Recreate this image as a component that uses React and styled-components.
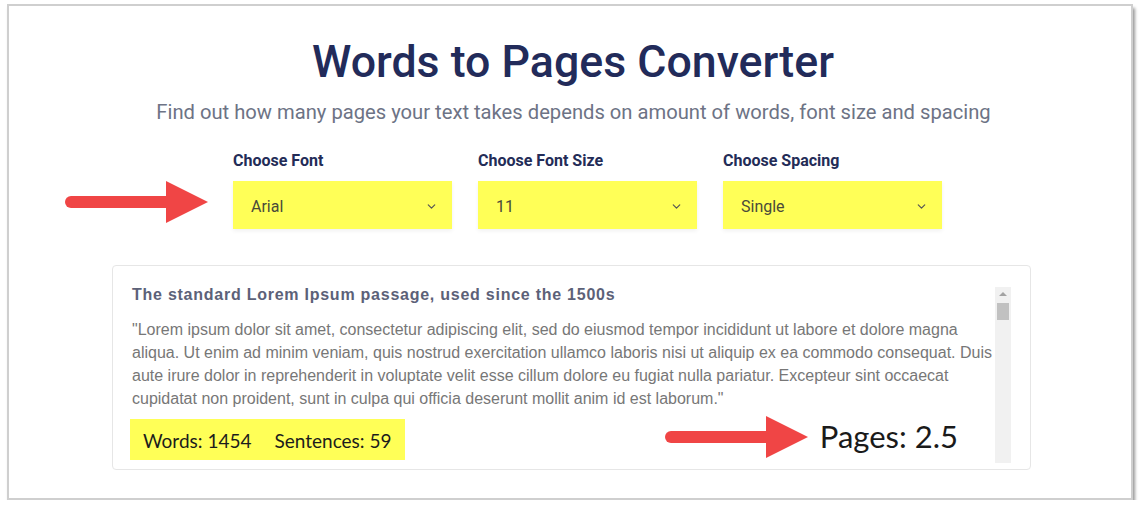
import React from 'react'
import styled, {createGlobalStyle} from "styled-components";
import {ChevronDown} from 'lucide-react'

const GlobalStyle = createGlobalStyle`
  body {
    margin: 0;
    background: #fff;
    font-family: 'Roboto', sans-serif;
  }
`;

const selects = [
  {label: 'Choose Font', value: 'Arial'},
  {label: 'Choose Font Size', value: '11'},
  {label: 'Choose Spacing', value: 'Single'},
];

const passage = '"Lorem ipsum dolor sit amet, consectetur adipiscing elit, sed do eiusmod tempor incididunt ut labore et dolore magna aliqua. Ut enim ad minim veniam, quis nostrud exercitation ullamco laboris nisi ut aliquip ex ea commodo consequat. Duis aute irure dolor in reprehenderit in voluptate velit esse cillum dolore eu fugiat nulla pariatur. Excepteur sint occaecat cupidatat non proident, sunt in culpa qui officia deserunt mollit anim id est laborum."';

function Arrow() {
    return (
        <svg width="143" height="42" viewBox="0 0 143 42">
            <line x1="6" y1="21" x2="104" y2="21" stroke="#f04545" strokeWidth="12" strokeLinecap="round" />
            <polygon points="101,0 143,21 101,42" fill="#f04545" />
        </svg>
    )
}

function App() {
    return (
        <>
            <GlobalStyle />
            <Frame>
                <Title>Words to Pages Converter</Title>
                <Subtitle>Find out how many pages your text takes depends on amount of words, font size and spacing</Subtitle>
                <ControlsRow>
                    <ArrowSlot $bottom={6}><Arrow /></ArrowSlot>
                    {selects.map((s) => (
                        <Field key={s.label}>
                            <Label>{s.label}</Label>
                            <Select>
                                <span>{s.value}</span>
                                <ChevronDown size={13} strokeWidth={2.2} color="#555" />
                            </Select>
                        </Field>
                    ))}
                </ControlsRow>
                <Card>
                    <TextColumn>
                        <Heading>The standard Lorem Ipsum passage, used since the 1500s</Heading>
                        <Passage>{passage}</Passage>
                        <StatsRow>
                            <Stats>
                                <span>Words: 1454</span>
                                <span>Sentences: 59</span>
                            </Stats>
                            <Result>
                                <Arrow />
                                <Pages>Pages: 2.5</Pages>
                            </Result>
                        </StatsRow>
                    </TextColumn>
                    <Scrollbar>
                        <ScrollUp />
                        <Thumb />
                    </Scrollbar>
                </Card>
            </Frame>
        </>
    )
}

export default App

const Frame = styled.div`
  box-sizing: border-box;
  margin: 4px 0 0 7px;
  width: 1126px;
  height: 496px;
  border: 2px solid #cfcfcf;
  box-shadow: 2px 4px 3px rgba(0,0,0,0.4);
  padding-top: 30px;
  display: flex;
  flex-direction: column;
  align-items: stretch;
`;

const Title = styled.h1`
  margin: 0;
  text-align: center;
  font-family: 'Roboto', sans-serif;
  font-weight: 500;
  font-size: 44.7px;
  line-height: 52px;
  color: #222b5a;
  padding-left: 6px;
`;

const Subtitle = styled.p`
  margin: 12px 0 0;
  text-align: center;
  font-size: 20.2px;
  line-height: 24px;
  color: #6d7385;
  padding-left: 7px;
`;

const ControlsRow = styled.div`
  display: flex;
  align-items: flex-end;
  gap: 26px;
  margin-top: 27px;
  padding-left: 56px;
`;

const ArrowSlot = styled.div`
  display: flex;
  margin-right: -1px;
  margin-bottom: ${p => p.$bottom}px;
`;

const Field = styled.div`
  display: flex;
  flex-direction: column;
  gap: 10px;
`;

const Label = styled.div`
  font-size: 16px;
  line-height: 20px;
  font-weight: 700;
  color: #232c57;
`;

const Select = styled.div`
  box-sizing: border-box;
  width: 219px;
  height: 48px;
  background: #ffff57;
  box-shadow: 0 2px 4px rgba(0,0,0,0.06);
  display: flex;
  align-items: center;
  justify-content: space-between;
  padding: 2px 14px 0 18px;
  font-size: 16px;
  color: #4a4a3a;
`;

const Card = styled.div`
  box-sizing: border-box;
  margin: 36px 0 0 103px;
  width: 919px;
  height: 205px;
  border: 1px solid #e6e6e6;
  border-radius: 4px;
  padding: 20px 19px 6px 17px;
  display: grid;
  grid-template-columns: 863px 16px;
  column-gap: 2px;
`;

const TextColumn = styled.div`
  display: flex;
  flex-direction: column;
`;

const Heading = styled.h3`
  margin: 0;
  padding-left: 2px;
  font-family: 'Liberation Sans', Arial, sans-serif;
  font-weight: 700;
  font-size: 16px;
  letter-spacing: 0.75px;
  line-height: 18px;
  color: #5c6178;
`;

const Passage = styled.p`
  margin: 14px 0 0;
  padding-left: 2px;
  font-family: 'Liberation Sans', Arial, sans-serif;
  font-size: 16px;
  line-height: 23px;
  color: #777;
`;

const StatsRow = styled.div`
  display: flex;
  align-items: center;
  justify-content: space-between;
  margin-top: 9px;
  padding-right: 35px;
`;

const Stats = styled.div`
  box-sizing: border-box;
  height: 41px;
  width: 275px;
  background: #ffff57;
  display: flex;
  align-items: center;
  gap: 23px;
  padding: 1px 0 0 13px;
  font-family: 'Lato', sans-serif;
  font-size: 19px;
  color: #1c1c1c;
`;

const Result = styled.div`
  display: flex;
  align-items: center;
  gap: 12px;
  margin-top: -6px;
`;

const Pages = styled.div`
  font-family: 'Lato', sans-serif;
  font-size: 31px;
  color: #1a1a1a;
  margin-top: -2px;
`;

const Scrollbar = styled.div`
  margin-top: 1px;
  background: #f1f1f1;
  display: flex;
  flex-direction: column;
  align-items: center;
`;

const ScrollUp = styled.div`
  margin-top: 5px;
  width: 0;
  height: 0;
  border-left: 4px solid transparent;
  border-right: 4px solid transparent;
  border-bottom: 4px solid #a3a3a3;
`;

const Thumb = styled.div`
  margin-top: 7px;
  width: 12px;
  height: 17px;
  background: #c1c1c1;
`;
